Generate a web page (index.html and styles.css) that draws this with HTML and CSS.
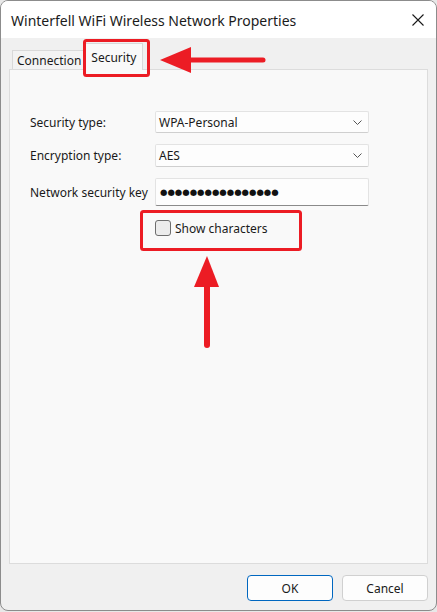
FILE: index.html
```html
<!DOCTYPE html>
<html>
<head>
<meta charset="utf-8">
<link rel="stylesheet" href="styles.css">
</head>
<body>
<div class="window">
  <div class="titlebar">
    <span class="title">Winterfell WiFi Wireless Network Properties</span>
    <svg class="close" width="12" height="12" viewBox="0 0 12 12"><path d="M0.5 0.5 L11.5 11.5 M11.5 0.5 L0.5 11.5" stroke="#1a1a1a" stroke-width="1.1" fill="none"/></svg>
  </div>
  <div class="content">
    <div class="tabs">
      <div class="tab">Connection</div>
      <div class="tab active">Security</div>
    </div>
    <div class="panel">
      <div class="form">
        <label class="label">Security type:</label>
        <div class="combo"><span>WPA-Personal</span><svg width="9" height="5" viewBox="0 0 9 5"><path d="M0.5 0.5 L4.5 4.5 L8.5 0.5" stroke="#555" stroke-width="1" fill="none"/></svg></div>
        <label class="label">Encryption type:</label>
        <div class="combo"><span>AES</span><svg width="9" height="5" viewBox="0 0 9 5"><path d="M0.5 0.5 L4.5 4.5 L8.5 0.5" stroke="#555" stroke-width="1" fill="none"/></svg></div>
        <label class="label">Network security key</label>
        <div class="textbox"><span class="dots">●●●●●●●●●●●●●●●●</span></div>
      </div>
      <div class="check-row">
        <span class="checkbox"></span>
        <span class="check-label">Show characters</span>
      </div>
    </div>
    <div class="buttons">
      <button class="btn primary">OK</button>
      <button class="btn">Cancel</button>
    </div>
  </div>
  <svg class="annot" width="437" height="612" viewBox="0 0 437 612">
    <rect x="84.5" y="40.5" width="64" height="35" rx="2" fill="none" stroke="#ec1c24" stroke-width="3"/>
    <rect x="141.5" y="211.5" width="159" height="38" rx="2" fill="none" stroke="#ec1c24" stroke-width="3"/>
    <path d="M188 60 L263 60" stroke="#ec1c24" stroke-width="5" stroke-linecap="round"/>
    <path d="M160 60 L191 47 L191 73 Z" fill="#ec1c24"/>
    <path d="M207 284 L207 345" stroke="#ec1c24" stroke-width="6" stroke-linecap="round"/>
    <path d="M207 256 L194 287 L219 287 Z" fill="#ec1c24"/>
  </svg>
</div>
</body>
</html>
```

FILE: styles.css
```css
* { box-sizing: border-box; }
html, body { margin: 0; padding: 0; }
body {
  width: 437px;
  height: 612px;
  background: #e8e8e8;
  font-family: "Noto Sans", "Open Sans", sans-serif;
  color: #1a1a1a;
  overflow: hidden;
}
.window {
  position: relative;
  width: 437px;
  height: 611px;
  border: 1px solid #8c8c8c;
  border-radius: 8px;
  background: #f0f0f0;
  overflow: hidden;
}
.titlebar {
  height: 37px;
  background: #ffffff;
  display: flex;
  align-items: center;
  justify-content: space-between;
  padding: 0 12px 0 10px;
}
.title {
  font-size: 14px;
  color: #1b1b1b;
  margin-top: 1px;
}
.close { margin-top: 1px; }
.content {
  padding: 0 8px 0 8px;
}
.tabs {
  display: flex;
  align-items: flex-end;
  height: 31px;
  padding-left: 3px;
}
.tab {
  font-size: 12px;
  height: 19px;
  line-height: 20px;
  padding: 0 4px;
  border: 1px solid #d9d9d9;
  border-bottom: none;
  background: #f3f3f3;
}
.tab.active {
  height: 27px;
  line-height: 27px;
  background: #f9f9f9;
  padding: 0 6px 0 5px;
  position: relative;
  z-index: 1;
  margin-bottom: -1px;
  border-left: none;
}
.panel {
  height: 495px;
  border: 1px solid #dcdcdc;
  background: #f9f9f9;
  padding: 41px 0 0 20px;
}
.form {
  display: grid;
  grid-template-columns: 125px 214px;
  grid-template-rows: 22px 23px 28px;
  row-gap: 11px;
  align-items: center;
}
.label {
  font-size: 12px;
  color: #1a1a1a;
}
.combo {
  height: 100%;
  background: #fdfdfd;
  border: 1px solid #e3e3e3;
  border-bottom: 1px solid #cfcfcf;
  border-radius: 2px;
  display: flex;
  align-items: center;
  justify-content: space-between;
  padding: 0 6px 0 3px;
  font-size: 12px;
}
.textbox {
  height: 100%;
  background: #fdfdfd;
  border: 1px solid #e3e3e3;
  border-bottom: 1.5px solid #8a8a8a;
  border-radius: 2px;
  display: flex;
  align-items: center;
  padding: 0 4px;
}
.dots {
  font-family: "DejaVu Sans", sans-serif;
  font-size: 8.5px;
  letter-spacing: 0;
  color: #111;
}
.check-row {
  display: flex;
  align-items: center;
  margin: 14px 0 0 125px;
  height: 16px;
}
.checkbox {
  width: 16px;
  height: 16px;
  border: 1px solid #6e6e6e;
  border-radius: 3px;
  background: #ececec;
  margin-right: 4px;
}
.check-label {
  font-size: 12px;
}
.buttons {
  display: flex;
  justify-content: flex-end;
  gap: 9px;
  margin-top: 11px;
}
.btn {
  width: 86px;
  height: 26px;
  border: 1px solid #d0d0d0;
  border-radius: 4px;
  background: #fdfdfd;
  font-family: "Noto Sans", "Open Sans", sans-serif;
  font-size: 12px;
  color: #1a1a1a;
  padding: 0;
}
.btn.primary {
  border: 1px solid #0067c0;
}
.annot {
  position: absolute;
  left: -1px;
  top: -1px;
  pointer-events: none;
}
```
